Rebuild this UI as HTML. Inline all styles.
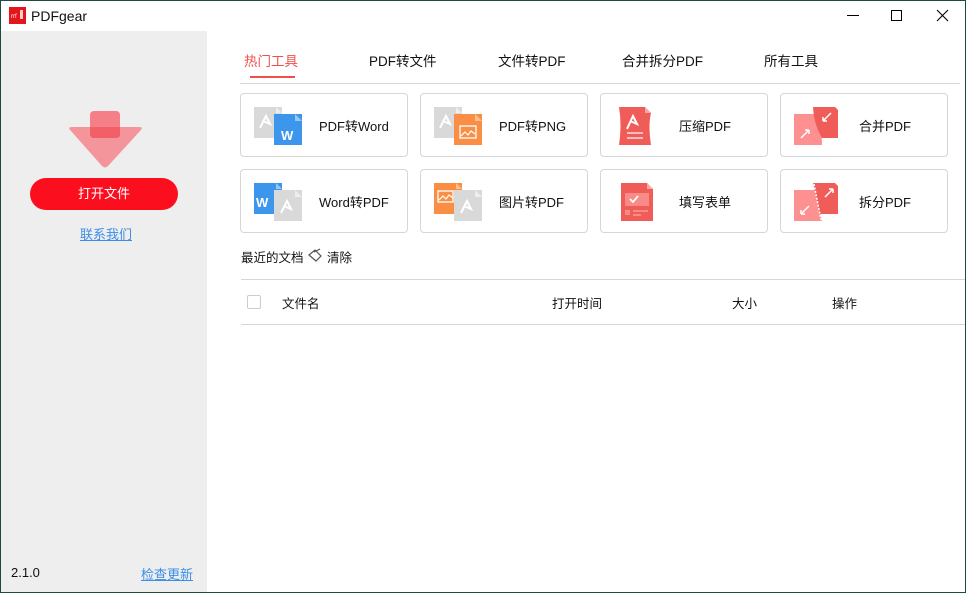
<!DOCTYPE html>
<html><head><meta charset="utf-8"><style>
*{margin:0;padding:0;box-sizing:border-box}
body{width:966px;height:593px;overflow:hidden;background:#1d4a44;font-family:"Liberation Sans","Noto Sans CJK SC",sans-serif;color:#111;font-size:13px;position:relative}
.win{position:absolute;left:1px;top:1px;width:964px;height:591px;background:#fff}
.abs{position:absolute}
.side{position:absolute;left:0;top:30px;width:206px;height:561px;background:#eeeeee}
.tab{position:absolute;top:49px;font-size:13.5px}
.card{position:absolute;width:168px;height:64px;border:1px solid #d6d6d6;border-radius:4px;background:#fff}
.card svg{position:absolute;left:12px;top:11px}
.card span{position:absolute;left:78px;top:22px;font-size:13px}
</style></head><body><div class="win">
<svg class="abs" style="left:8px;top:6px" width="17" height="17"><rect width="17" height="17" fill="#e4161b"/><text x="2" y="11" font-size="6" fill="#fff" font-family="Liberation Sans">rrf</text><rect x="11" y="3" width="3" height="9" fill="#fff" opacity=".8"/></svg>
<div class="abs" style="left:30px;top:7px;font-size:14px">PDFgear</div>
<div class="abs" style="left:846px;top:14px;width:12px;height:1px;background:#000"></div>
<div class="abs" style="left:890px;top:9px;width:11px;height:11px;border:1px solid #000"></div>
<svg class="abs" style="left:935px;top:8px" width="13" height="13"><path d="M1 1L12 12M12 1L1 12" stroke="#000" stroke-width="1.1"/></svg>
<div class="side">
<svg class="abs" style="left:66px;top:80px" width="78" height="60"><path d="M4 20 Q0 16 5 16 H72 Q77 16 73 20 L41 55 Q38 58 35 55 Z" fill="#f4959b"/><rect x="23" y="0" width="30" height="27" rx="4" fill="#f47f86"/><path d="M23 16 H53 V23 Q53 27 49 27 H27 Q23 27 23 23Z" fill="#f25f66"/></svg>
<div class="abs" style="left:29px;top:147px;width:148px;height:32px;border-radius:16px;background:#fb0f1f;color:#fff;text-align:center;line-height:32px;font-size:13px">打开文件</div>
<div class="abs" style="left:79px;top:193px;color:#3b8ee8;text-decoration:underline;font-size:13px">联系我们</div>
<div class="abs" style="left:10px;top:534px;font-size:13px">2.1.0</div>
<div class="abs" style="left:140px;top:533px;color:#3b8ee8;text-decoration:underline;font-size:13px">检查更新</div>
</div>
<div class="tab" style="left:243px;color:#f0504a">热门工具</div>
<div class="abs" style="left:249px;top:75px;width:45px;height:2px;background:#f0504a"></div>
<div class="tab" style="left:368px">PDF转文件</div>
<div class="tab" style="left:497px">文件转PDF</div>
<div class="tab" style="left:621px">合并拆分PDF</div>
<div class="tab" style="left:763px">所有工具</div>
<div class="abs" style="left:239px;top:82px;width:720px;height:1px;background:#d6d6d6"></div>
<div class="card" style="left:239px;top:92px"><svg width="50" height="40"><rect x="1" y="2" width="28" height="31" fill="#d9d9d9"/><path d="M23 2L29 8H23Z" fill="#eee"/><path d="M7 23L13 11L17 19L10 16" stroke="#fff" stroke-width="2" fill="none"/><rect x="21" y="9" width="28" height="31" fill="#3c96ec"/><path d="M42 9L49 16H42Z" fill="#9ac8f5"/><text x="28" y="35" font-size="13" fill="#fff" font-weight="bold" font-family="Liberation Sans">W</text></svg><span>PDF转Word</span></div>
<div class="card" style="left:419px;top:92px"><svg width="50" height="40"><rect x="1" y="2" width="28" height="31" fill="#d9d9d9"/><path d="M23 2L29 8H23Z" fill="#eee"/><path d="M7 23L13 11L17 19L10 16" stroke="#fff" stroke-width="2" fill="none"/><rect x="21" y="9" width="28" height="31" fill="#fb8e45"/><path d="M42 9L49 16H42Z" fill="#fcc08f"/><rect x="27" y="21" width="16" height="12" fill="none" stroke="#fff" stroke-width="1.3"/><path d="M28 31L32 27L35 30L38 26L42 29" stroke="#fff" stroke-width="1.2" fill="none"/></svg><span>PDF转PNG</span></div>
<div class="card" style="left:599px;top:92px"><svg width="50" height="40"><path d="M6 2H32L38 8Q35 20 38 40H6Q9 20 6 2Z" fill="#f05d59"/><path d="M32 2L38 8H32Z" fill="#f8a9a6"/><path d="M14 24L20 11L24 19L17 16" stroke="#fff" stroke-width="2" fill="none"/><rect x="14" y="27" width="16" height="2" fill="#fbb"/><rect x="14" y="32" width="16" height="2" fill="#fbb"/></svg><span>压缩PDF</span></div>
<div class="card" style="left:779px;top:92px"><svg width="50" height="40"><path d="M1 9H28L29 40H1Z" fill="#fd9090"/><path d="M20 2H42L45 5V33H29Q21 20 20 2Z" fill="#f05d59"/><path d="M8 33L16 25M16 25H12M16 25V29" stroke="#fff" stroke-width="1.5" fill="none"/><path d="M38 8L30 16M30 16H34M30 16V12" stroke="#fff" stroke-width="1.5" fill="none"/></svg><span>合并PDF</span></div>
<div class="card" style="left:239px;top:168px"><svg width="50" height="40"><rect x="1" y="2" width="28" height="31" fill="#3c96ec"/><path d="M23 2L29 8H23Z" fill="#9ac8f5"/><text x="3" y="26" font-size="13" fill="#fff" font-weight="bold" font-family="Liberation Sans">W</text><rect x="21" y="9" width="28" height="31" fill="#d9d9d9"/><path d="M42 9L49 16H42Z" fill="#eee"/><path d="M28 32L34 20L38 28L31 25" stroke="#fff" stroke-width="2" fill="none"/></svg><span>Word转PDF</span></div>
<div class="card" style="left:419px;top:168px"><svg width="50" height="40"><rect x="1" y="2" width="28" height="31" fill="#fb8e45"/><path d="M23 2L29 8H23Z" fill="#fcc08f"/><rect x="5" y="10" width="15" height="11" fill="none" stroke="#fff" stroke-width="1.3"/><path d="M6 19L10 15L13 18L16 14L20 17" stroke="#fff" stroke-width="1.2" fill="none"/><rect x="21" y="9" width="28" height="31" fill="#d9d9d9"/><path d="M42 9L49 16H42Z" fill="#eee"/><path d="M28 32L34 20L38 28L31 25" stroke="#fff" stroke-width="2" fill="none"/></svg><span>图片转PDF</span></div>
<div class="card" style="left:599px;top:168px"><svg width="50" height="40"><path d="M8 2H34L40 8V40H8Z" fill="#f05d59"/><path d="M34 2L40 8H34Z" fill="#f8a9a6"/><rect x="12" y="12" width="24" height="13" fill="#f88b88"/><path d="M17 18L20 21L25 15" stroke="#fff" stroke-width="1.8" fill="none"/><rect x="12" y="29" width="5" height="5" fill="#f88b88"/><rect x="20" y="29" width="15" height="2" fill="#f88b88"/><rect x="20" y="33" width="8" height="2" fill="#f88b88"/></svg><span>填写表单</span></div>
<div class="card" style="left:779px;top:168px"><svg width="50" height="40"><path d="M1 9H22L29 40H1Z" fill="#fd9090"/><path d="M20 2H42L45 5V33H27Z" fill="#f05d59"/><path d="M21 3L28 39" stroke="#fff" stroke-width="1.5" stroke-dasharray="2 1.5"/><path d="M32 16L40 8M40 8H36M40 8V12" stroke="#fff" stroke-width="1.5" fill="none"/><path d="M16 25L8 33M8 33H12M8 33V29" stroke="#fff" stroke-width="1.5" fill="none"/></svg><span>拆分PDF</span></div>
<div class="abs" style="left:240px;top:246px;font-size:12.5px">最近的文档</div>
<svg class="abs" style="left:306px;top:247px" width="16" height="14"><path d="M2 7L8 2L14 8L9 13Z M7 4L13 1" stroke="#555" stroke-width="1.2" fill="none"/></svg>
<div class="abs" style="left:326px;top:246px;font-size:12.5px">清除</div>
<div class="abs" style="left:240px;top:278px;width:724px;height:1px;background:#d6d6d6"></div>
<div class="abs" style="left:246px;top:294px;width:14px;height:14px;border:1px solid #ccc;border-radius:2px"></div>
<div class="abs" style="left:281px;top:292px;font-size:12.5px">文件名</div>
<div class="abs" style="left:551px;top:292px;font-size:12.5px">打开时间</div>
<div class="abs" style="left:731px;top:292px;font-size:12.5px">大小</div>
<div class="abs" style="left:831px;top:292px;font-size:12.5px">操作</div>
<div class="abs" style="left:240px;top:323px;width:724px;height:1px;background:#d6d6d6"></div>
</div></body></html>
